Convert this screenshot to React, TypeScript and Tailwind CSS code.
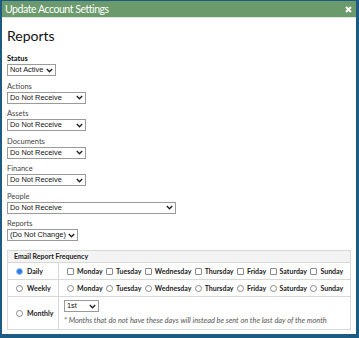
import React from "react";

const DAYS = ["Monday", "Tuesday", "Wednesday", "Thursday", "Friday", "Saturday", "Sunday"];

const FIELDS: { label: string; value: string; width: string; bold?: boolean }[] = [
  { label: "Status", value: "Not Active", width: "w-[49px]", bold: true },
  { label: "Actions", value: "Do Not Receive", width: "w-[79px]" },
  { label: "Assets", value: "Do Not Receive", width: "w-[79px]" },
  { label: "Documents", value: "Do Not Receive", width: "w-[79px]" },
  { label: "Finance", value: "Do Not Receive", width: "w-[79px]" },
  { label: "People", value: "Do Not Receive", width: "w-[169px]" },
  { label: "Reports", value: "(Do Not Change)", width: "w-[71px]" },
];

const Chevron = () => (
  <svg width="7" height="5" viewBox="0 0 7 5" className="shrink-0">
    <path d="M0.8 1 L3.5 3.7 L6.2 1" fill="none" stroke="#222" strokeWidth="1.4" />
  </svg>
);

const FakeSelect = ({ value, width }: { value: string; width: string }) => (
  <div
    className={`${width} h-[12px] flex items-center justify-between gap-[2px] border border-[#9a9a9a] bg-white pl-[2px] pr-[2px] text-[7.4px] leading-none text-[#111] font-['Liberation_Sans',Arial,sans-serif]`}
  >
    <span className="whitespace-nowrap">{value}</span>
    <Chevron />
  </div>
);

const Box = () => (
  <span className="inline-block w-[7px] h-[7px] border border-[#8a8a8a] rounded-[1px] bg-white shrink-0" />
);

const Radio = ({ on }: { on?: boolean }) =>
  on ? (
    <span className="w-[7px] h-[7px] rounded-full bg-[#2b7de3] border border-[#9cc3f0] shrink-0" />
  ) : (
    <span className="inline-block w-[7px] h-[7px] rounded-full border border-[#8a8a8a] bg-white shrink-0" />
  );

export default function App() {
  return (
    <div className="w-[359px] h-[338px] flex flex-col bg-white border-t border-l-2 border-r-[3px] border-b-4 border-[#1e5b83] font-['Lato','Noto_Sans',sans-serif] overflow-hidden">
      <div className="h-[17px] shrink-0 bg-[#6b9a6c] flex items-center justify-between pl-[3px] pr-[4px] border-b border-[#dfe6df]">
        <span className="text-white text-[10.5px] tracking-[-0.45px] leading-none">Update Account Settings</span>
        <svg width="7" height="7" viewBox="0 0 7 7">
          <path d="M1 1 L6 6 M6 1 L1 6" stroke="#fff" strokeWidth="2" />
        </svg>
      </div>

      <div className="px-[5px] pt-[9px]">
        <h1 className="text-[14px] leading-[17px] text-[#111] font-normal">Reports</h1>

        <div className="mt-[11px] flex flex-col gap-[6.5px]">
          {FIELDS.map((f) => (
            <div key={f.label} className="flex flex-col">
              <span
                className={`text-[7.5px] leading-[8px] ${f.bold ? "font-bold text-[#111]" : "text-[#444]"}`}
              >
                {f.label}
              </span>
              <div className="mt-[1px]">
                <FakeSelect value={f.value} width={f.width} />
              </div>
            </div>
          ))}
        </div>

        <div className="mt-[9px] border border-[#d8d8d8] text-[7px] text-[#222]">
          <div className="h-[12px] flex items-center bg-[#f3f3f3] pl-[6px] font-bold border-b border-[#d8d8d8]">
            Email Report Frequency
          </div>

          <div className="flex h-[17px] border-b border-[#d8d8d8]">
            <div className="w-[51px] shrink-0 flex items-center gap-[4px] pl-[8px] border-r border-[#d8d8d8] font-bold">
              <Radio on />
              Daily
            </div>
            <div className="flex items-center gap-[3.4px] pl-[8px] font-bold">
              {DAYS.map((d) => (
                <span key={d} className="flex items-center gap-[3px]">
                  <Box />
                  {d}
                </span>
              ))}
            </div>
          </div>

          <div className="flex h-[17px] border-b border-[#d8d8d8]">
            <div className="w-[51px] shrink-0 flex items-center gap-[4px] pl-[8px] border-r border-[#d8d8d8] font-bold">
              <Radio />
              Weekly
            </div>
            <div className="flex items-center gap-[3.4px] pl-[8px] font-bold">
              {DAYS.map((d) => (
                <span key={d} className="flex items-center gap-[3px]">
                  <Radio />
                  {d}
                </span>
              ))}
            </div>
          </div>

          <div className="flex h-[32px]">
            <div className="w-[51px] shrink-0 flex items-center gap-[4px] pl-[8px] border-r border-[#d8d8d8] font-bold">
              <Radio />
              Monthly
            </div>
            <div className="flex flex-col pl-[5px] pt-[3px]">
              <FakeSelect value="1st" width="w-[35px]" />
              <span className="mt-[4px] italic text-[#555] text-[7.4px] leading-[10px]">
                * Months that do not have these days will instead be sent on the last day of the month
              </span>
            </div>
          </div>
        </div>
      </div>
    </div>
  );
}
